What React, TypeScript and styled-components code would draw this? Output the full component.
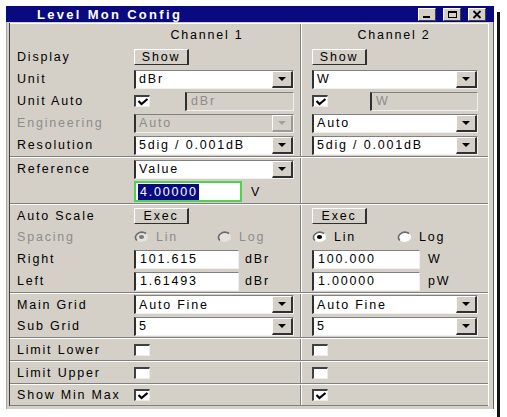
import React from 'react';
import styled, { createGlobalStyle } from 'styled-components';

const FACE = '#d4d0c8';
const SHADOW = '#808080';
const DARK = '#303030';
const MUTED = '#8c8c8c';

const GlobalStyle = createGlobalStyle`
	html, body {
		margin: 0;
		padding: 0;
		background: #ffffff;
	}
	body {
		font-family: "Liberation Sans", Arial, sans-serif;
	}
`;

const Page = styled.div`
	display: flex;
	align-items: stretch;
	height: 417px;
	box-sizing: border-box;
	padding: 6px 0 0 6px;
`;

const Window = styled.div`
	width: 488px;
	align-self: flex-start;
	display: flex;
	flex-direction: column;
`;

const EdgeStrip = styled.div`
	width: 3px;
	margin: 6px 0 0 3px;
	background: #111111;
`;

const TitleBar = styled.div`
	height: 16px;
	display: flex;
	align-items: center;
	padding: 0 8px 0 31px;
	background: #0a0a80;
`;

const Title = styled.span`
	flex: 1;
	color: #ffffff;
	font-size: 13px;
	font-weight: bold;
	letter-spacing: 2.3px;
	white-space: nowrap;
`;

const TitleButtons = styled.div`
	display: flex;
	gap: 7px;
`;

const TitleButton = styled.div`
	width: 18px;
	height: 13px;
	box-sizing: border-box;
	display: flex;
	align-items: center;
	justify-content: center;
	background: ${FACE};
	border-top: 1px solid #ffffff;
	border-left: 1px solid #ffffff;
	border-right: 1px solid #404040;
	border-bottom: 1px solid #404040;
`;

const Body = styled.div`
	background: ${FACE};
	padding: 1px 4px 3px 2px;
	border-left: 1px solid #a8a8a8;
	border-right: 1px solid #606060;
`;

const Panel = styled.div`
	border-left: 1px solid #404040;
	border-right: 1px solid #ffffff;
`;

const Section = styled.div`
	border-top: 1px solid #ffffff;
	border-bottom: 1px solid ${SHADOW};
`;

const Row = styled.div<{ $h?: number }>`
	display: grid;
	grid-template-columns: 124px 167px 1fr;
	height: ${(p) => p.$h ?? 22}px;
	font-size: 12.5px;
	letter-spacing: 1.8px;
	color: #000000;
`;

const Label = styled.div<{ $muted?: boolean }>`
	display: flex;
	align-items: center;
	padding-left: 7px;
	white-space: nowrap;
	color: ${(p) => (p.$muted ? MUTED : '#000000')};
`;

const Cell = styled.div<{ $ch: 1 | 2 }>`
	display: flex;
	align-items: center;
	min-width: 0;
	box-sizing: border-box;
	${(p) =>
		p.$ch === 1
			? `border-right: 1px solid ${SHADOW}; padding-right: 6px;`
			: `border-left: 1px solid #ffffff; padding: 0 10px;`}
`;

const Heading = styled.span<{ $shift?: number }>`
	flex: 1;
	text-align: center;
	padding-right: ${(p) => p.$shift ?? 0}px;
	white-space: nowrap;
`;

const PushButton = styled.div`
	width: 55px;
	height: 16px;
	box-sizing: border-box;
	display: flex;
	align-items: center;
	justify-content: center;
	background: ${FACE};
	border-top: 1px solid #ffffff;
	border-left: 1px solid #ffffff;
	border-right: 2px solid ${DARK};
	border-bottom: 1px solid ${DARK};
	letter-spacing: 1.8px;
`;

const Combo = styled.div<{ $muted?: boolean }>`
	flex: 1;
	height: 19px;
	box-sizing: border-box;
	display: flex;
	align-items: stretch;
	background: ${(p) => (p.$muted ? FACE : '#ffffff')};
	border-top: 1px solid ${SHADOW};
	border-left: 2px solid ${DARK};
	border-right: 1px solid #f0f0f0;
	border-bottom: 1px solid #f0f0f0;
`;

const ComboText = styled.span<{ $muted?: boolean }>`
	flex: 1;
	display: flex;
	align-items: center;
	padding-left: 3px;
	white-space: nowrap;
	overflow: hidden;
	color: ${(p) => (p.$muted ? MUTED : '#000000')};
`;

const ComboArrow = styled.div<{ $muted?: boolean }>`
	width: 21px;
	box-sizing: border-box;
	display: flex;
	align-items: center;
	justify-content: center;
	background: ${FACE};
	border-top: 1px solid #ffffff;
	border-left: 1px solid #ffffff;
	border-right: 2px solid ${(p) => (p.$muted ? '#9a9a9a' : DARK)};
	border-bottom: 2px solid ${(p) => (p.$muted ? '#9a9a9a' : DARK)};

	&::after {
		content: '';
		border-left: 4px solid transparent;
		border-right: 4px solid transparent;
		border-top: 4px solid ${(p) => (p.$muted ? '#a0a0a0' : '#000000')};
	}
`;

const Field = styled.div<{ $w: number; $muted?: boolean; $fill?: boolean; $gap?: number }>`
	${(p) => (p.$fill ? 'flex: 1;' : `width: ${p.$w}px;`)}
	margin-left: ${(p) => p.$gap ?? 0}px;
	height: 19px;
	box-sizing: border-box;
	display: flex;
	align-items: center;
	padding-left: 4px;
	white-space: nowrap;
	background: ${(p) => (p.$muted ? FACE : '#ffffff')};
	color: ${(p) => (p.$muted ? MUTED : '#000000')};
	border-top: 1px solid ${SHADOW};
	border-left: 2px solid ${DARK};
	border-right: 1px solid #f0f0f0;
	border-bottom: 1px solid #f0f0f0;
`;

const FocusField = styled.div`
	width: 108px;
	height: 21px;
	box-sizing: border-box;
	display: flex;
	align-items: center;
	padding-left: 2px;
	background: #ffffff;
	border: 2px solid #4fd24f;
`;

const Selected = styled.span`
	background: #0a0a80;
	color: #ffffff;
	padding: 1px 1px 1px 2px;
	line-height: 14px;
`;

const UnitText = styled.span<{ $gap: number }>`
	margin-left: ${(p) => p.$gap}px;
	white-space: nowrap;
`;

const Box = styled.div`
	width: 16px;
	height: 12px;
	box-sizing: border-box;
	display: flex;
	align-items: center;
	justify-content: center;
	background: #ffffff;
	border-top: 2px solid #404040;
	border-left: 2px solid #404040;
	border-right: 1px solid #ececec;
	border-bottom: 1px solid #ececec;
`;

const RadioGroup = styled.div`
	display: flex;
	align-items: center;
`;

const RadioItem = styled.div<{ $w: number; $muted?: boolean }>`
	width: ${(p) => p.$w}px;
	display: flex;
	align-items: center;
	gap: 7px;
	color: ${(p) => (p.$muted ? MUTED : '#000000')};
`;

function CheckBox({ checked }: { checked?: boolean }) {
	return (
		<Box>
			{checked && (
				<svg width="12" height="8" viewBox="0 0 12 8">
					<polyline points="1.5,3 4.5,6 10.5,1" fill="none" stroke="#000" strokeWidth="2.2" />
				</svg>
			)}
		</Box>
	);
}

function Radio({ on, muted }: { on?: boolean; muted?: boolean }) {
	return (
		<svg width="15" height="12" viewBox="0 0 15 12">
			<ellipse cx="7.5" cy="6" rx="6.5" ry="5" fill={muted ? '#e4e2de' : '#ffffff'} />
			<path d="M2.9 9.5 A6.5 5 0 0 1 12.1 2.5" fill="none" stroke="#6a6a6a" strokeWidth="1.6" />
			{on && <ellipse cx="7.5" cy="6" rx="2.6" ry="2" fill={muted ? '#7a7a7a' : '#000'} />}
		</svg>
	);
}

function Select({ value, muted }: { value: string; muted?: boolean }) {
	return (
		<Combo $muted={muted}>
			<ComboText $muted={muted}>{value}</ComboText>
			<ComboArrow $muted={muted} />
		</Combo>
	);
}

export default function App() {
	return (
		<>
			<GlobalStyle />
			<Page>
				<Window>
					<TitleBar>
						<Title>Level Mon Config</Title>
						<TitleButtons>
							<TitleButton>
								<svg width="10" height="9" viewBox="0 0 10 9">
									<rect x="1" y="6" width="7" height="2" fill="#000" />
								</svg>
							</TitleButton>
							<TitleButton>
								<svg width="11" height="9" viewBox="0 0 11 9">
									<rect x="1.5" y="1.5" width="8" height="6" fill="none" stroke="#000" />
									<rect x="1" y="1" width="9" height="2" fill="#000" />
								</svg>
							</TitleButton>
							<TitleButton>
								<svg width="10" height="9" viewBox="0 0 10 9">
									<path d="M1.5 1 L8.5 8 M8.5 1 L1.5 8" stroke="#000" strokeWidth="1.8" />
								</svg>
							</TitleButton>
						</TitleButtons>
					</TitleBar>
					<Body>
						<Panel>
							<Section>
								<Row>
									<Label />
									<Cell $ch={1}>
										<Heading $shift={14}>Channel 1</Heading>
									</Cell>
									<Cell $ch={2}>
										<Heading $shift={2}>Channel 2</Heading>
									</Cell>
								</Row>
								<Row>
									<Label>Display</Label>
									<Cell $ch={1}>
										<PushButton>Show</PushButton>
									</Cell>
									<Cell $ch={2}>
										<PushButton>Show</PushButton>
									</Cell>
								</Row>
								<Row>
									<Label>Unit</Label>
									<Cell $ch={1}>
										<Select value="dBr" />
									</Cell>
									<Cell $ch={2}>
										<Select value="W" />
									</Cell>
								</Row>
								<Row>
									<Label>Unit Auto</Label>
									<Cell $ch={1}>
										<CheckBox checked />
										<Field $w={0} $fill $muted $gap={35}>
											dBr
										</Field>
									</Cell>
									<Cell $ch={2}>
										<CheckBox checked />
										<Field $w={0} $fill $muted $gap={42}>
											W
										</Field>
									</Cell>
								</Row>
								<Row>
									<Label $muted>Engineering</Label>
									<Cell $ch={1}>
										<Select value="Auto" muted />
									</Cell>
									<Cell $ch={2}>
										<Select value="Auto" />
									</Cell>
								</Row>
								<Row>
									<Label>Resolution</Label>
									<Cell $ch={1}>
										<Select value="5dig / 0.001dB" />
									</Cell>
									<Cell $ch={2}>
										<Select value="5dig / 0.001dB" />
									</Cell>
								</Row>
							</Section>

							<Section>
								<Row>
									<Label>Reference</Label>
									<Cell $ch={1}>
										<Select value="Value" />
									</Cell>
									<Cell $ch={2} />
								</Row>
								<Row $h={23}>
									<Label />
									<Cell $ch={1}>
										<FocusField>
											<Selected>4.00000</Selected>
										</FocusField>
										<UnitText $gap={9}>V</UnitText>
									</Cell>
									<Cell $ch={2} />
								</Row>
							</Section>

							<Section>
								<Row $h={21}>
									<Label>Auto Scale</Label>
									<Cell $ch={1}>
										<PushButton>Exec</PushButton>
									</Cell>
									<Cell $ch={2}>
										<PushButton>Exec</PushButton>
									</Cell>
								</Row>
								<Row>
									<Label $muted>Spacing</Label>
									<Cell $ch={1}>
										<RadioGroup>
											<RadioItem $w={83} $muted>
												<Radio on muted />
												Lin
											</RadioItem>
											<RadioItem $w={60} $muted>
												<Radio muted />
												Log
											</RadioItem>
										</RadioGroup>
									</Cell>
									<Cell $ch={2}>
										<RadioGroup>
											<RadioItem $w={85}>
												<Radio on />
												Lin
											</RadioItem>
											<RadioItem $w={60}>
												<Radio />
												Log
											</RadioItem>
										</RadioGroup>
									</Cell>
								</Row>
								<Row>
									<Label>Right</Label>
									<Cell $ch={1}>
										<Field $w={105}>101.615</Field>
										<UnitText $gap={6}>dBr</UnitText>
									</Cell>
									<Cell $ch={2}>
										<Field $w={108}>100.000</Field>
										<UnitText $gap={8}>W</UnitText>
									</Cell>
								</Row>
								<Row>
									<Label>Left</Label>
									<Cell $ch={1}>
										<Field $w={105}>1.61493</Field>
										<UnitText $gap={6}>dBr</UnitText>
									</Cell>
									<Cell $ch={2}>
										<Field $w={108}>1.00000</Field>
										<UnitText $gap={8}>pW</UnitText>
									</Cell>
								</Row>
							</Section>

							<Section>
								<Row $h={21}>
									<Label>Main Grid</Label>
									<Cell $ch={1}>
										<Select value="Auto Fine" />
									</Cell>
									<Cell $ch={2}>
										<Select value="Auto Fine" />
									</Cell>
								</Row>
								<Row>
									<Label>Sub Grid</Label>
									<Cell $ch={1}>
										<Select value="5" />
									</Cell>
									<Cell $ch={2}>
										<Select value="5" />
									</Cell>
								</Row>
							</Section>

							<Section>
								<Row $h={21}>
									<Label>Limit Lower</Label>
									<Cell $ch={1}>
										<CheckBox />
									</Cell>
									<Cell $ch={2}>
										<CheckBox />
									</Cell>
								</Row>
							</Section>

							<Section>
								<Row $h={21}>
									<Label>Limit Upper</Label>
									<Cell $ch={1}>
										<CheckBox />
									</Cell>
									<Cell $ch={2}>
										<CheckBox />
									</Cell>
								</Row>
							</Section>

							<Section>
								<Row $h={20}>
									<Label>Show Min Max</Label>
									<Cell $ch={1}>
										<CheckBox checked />
									</Cell>
									<Cell $ch={2}>
										<CheckBox checked />
									</Cell>
								</Row>
							</Section>
						</Panel>
					</Body>
				</Window>
				<EdgeStrip />
			</Page>
		</>
	);
}
